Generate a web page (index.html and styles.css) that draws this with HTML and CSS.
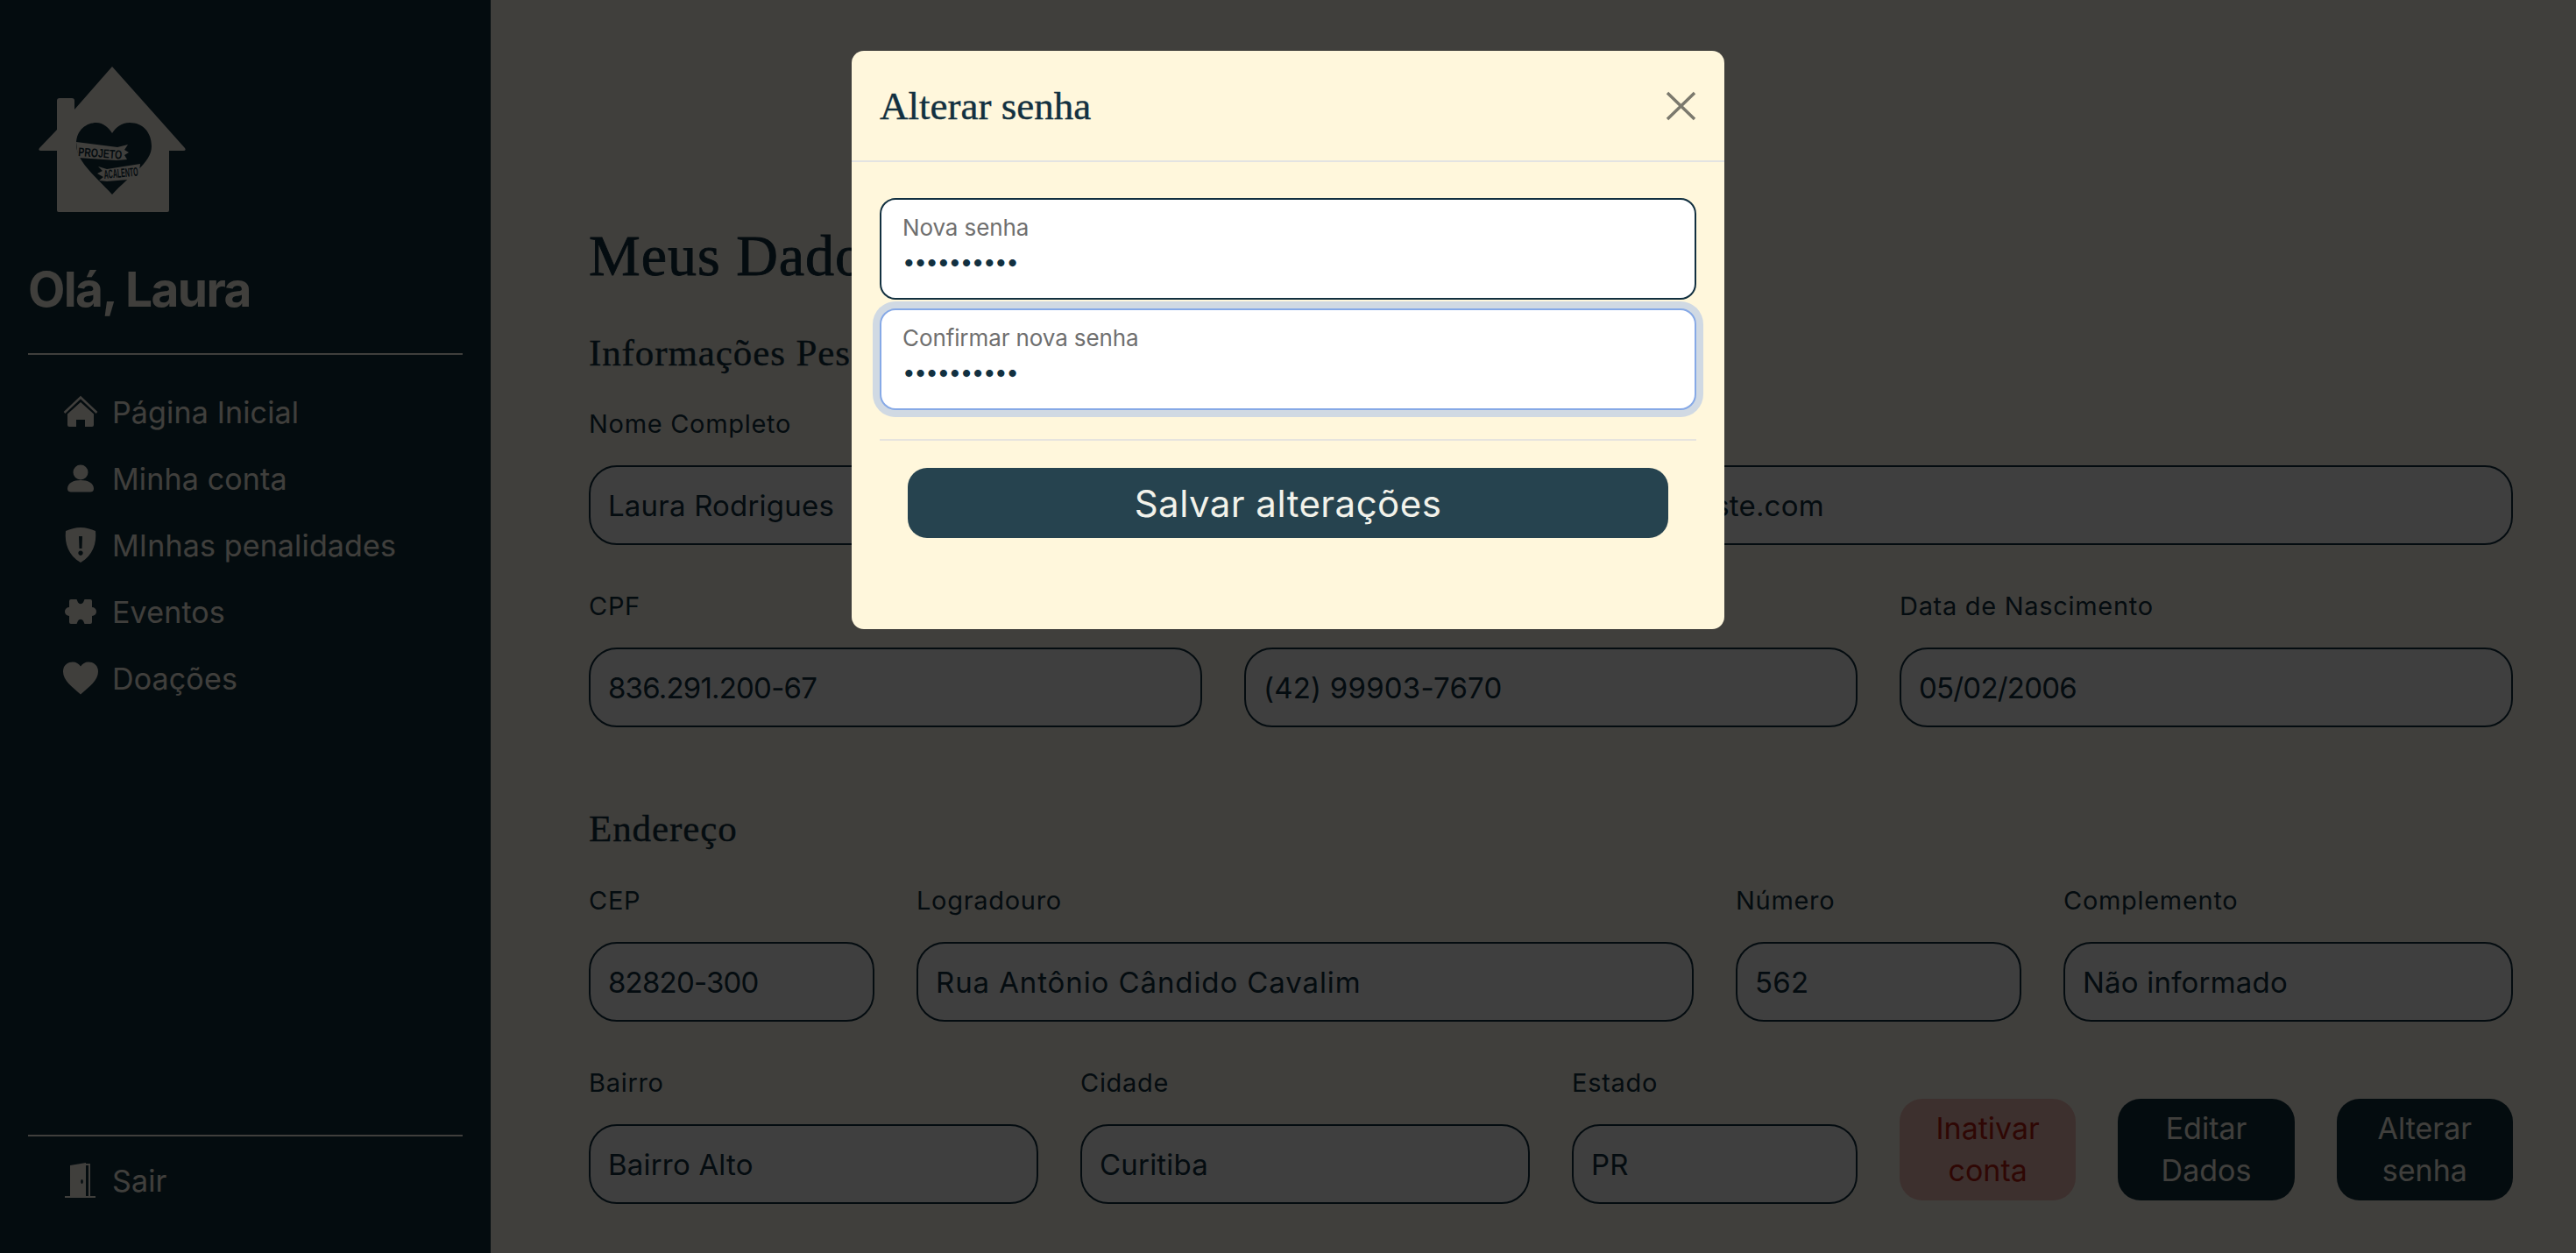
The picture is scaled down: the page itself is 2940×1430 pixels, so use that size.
FILE: index.html
```html
<!DOCTYPE html>
<html lang="pt-BR">
<head>
<meta charset="utf-8">
<title>Meus Dados</title>
<link rel="stylesheet" href="styles.css">
</head>
<body>
<div class="app">
  <aside class="sidebar">
    <svg class="logo" viewBox="0 0 168 166" width="168" height="166">
      <path class="logo-house" d="M84 0 L167 93 Q169 96 165 96 H149 V164 Q149 166 147 166 H23 Q21 166 21 164 V96 H3 Q-1 96 1 93 L21 72 V39 Q21 36 24 36 H38 Q41 36 41 39 V49 Z"/>
      <path class="logo-heart" d="M84 146 C62 122 43 108 43 88 C43 72 55 64 66 64 C74 64 80 70 84 76 C88 70 94 64 104 64 C119 64 129 75 129 91 C129 110 104 124 84 146Z"/>
      <path class="logo-band" d="M43 86 L90 92 L102 89 L98 95 L103 98 L98 101 L101 106 L89 107 L45 104Z"/>
      <path class="logo-band" d="M68 114 L78 117 L116 111 L114 128 L78 131 L69 130 L74 126 L67 122 L73 119Z"/>
      <text class="logo-text" x="45" y="102" textLength="50" lengthAdjust="spacingAndGlyphs" transform="rotate(4 45 102)">PROJETO</text>
      <text class="logo-text" x="75" y="128" textLength="39" lengthAdjust="spacingAndGlyphs" transform="rotate(-5 75 128)">ACALENTO</text>
    </svg>
    <h2 class="greeting">Olá, Laura</h2>
    <hr class="side-rule side-rule-top">
    <nav>
      <ul class="nav-list">
        <li class="nav-item">
          <svg class="nav-icon" viewBox="0 0 40 36"><path class="stroke-icon" d="M1.5 19 L20 1.5 L38.5 19"/><path d="M20 7 L35 20.5 V33 a2 2 0 0 1-2 2 H25 V27 H15 V35 H7 a2 2 0 0 1-2-2 V20.5Z"/></svg>
          <span>Página Inicial</span>
        </li>
        <li class="nav-item">
          <svg class="nav-icon" viewBox="0 0 40 32"><circle cx="20" cy="9" r="8.5"/><path d="M5 28 C5 21 12 18 20 18 C28 18 35 21 35 28 C35 30.500 33 31.500 31 31.500 H9 C7 31.500 5 30.500 5 28Z"/></svg>
          <span>Minha conta</span>
        </li>
        <li class="nav-item">
          <svg class="nav-icon" viewBox="0 0 40 40"><path fill-rule="evenodd" d="M20 0 C26 0 32 2 37 4 C38.500 18 34 32 20 40 C6 32 1.500 18 3 4 C8 2 14 0 20 0Z M18 10 L18.500 24 H21.500 L22 10Z M20 26.500 a2.700 2.700 0 1 0 .01 0Z"/></svg>
          <span>MInhas penalidades</span>
        </li>
        <li class="nav-item">
          <svg class="nav-icon" viewBox="0 0 40 30"><path d="M9 1 H15.500 L17 4.500 A3.500 3.500 0 0 0 23 4.500 L24.500 1 H31 a2 2 0 0 1 2 2 V10 A5 5 0 1 1 33 20 V27 a2 2 0 0 1-2 2 H24.500 L23 25.500 A3.500 3.500 0 0 0 17 25.500 L15.500 29 H9 a2 2 0 0 1-2-2 V20 A5 5 0 1 1 7 10 V3 a2 2 0 0 1 2-2Z"/></svg>
          <span>Eventos</span>
        </li>
        <li class="nav-item">
          <svg class="nav-icon" viewBox="0 0 40 37"><path d="M20 37 C10 28 0 21 0 11 C0 4 5 0 11 0 C15 0 18 2 20 5 C22 2 25 0 29 0 C35 0 40 4 40 11 C40 21 30 28 20 37Z"/></svg>
          <span>Doações</span>
        </li>
      </ul>
    </nav>
    <div class="side-footer">
      <hr class="side-rule">
      <div class="nav-item">
        <svg class="nav-icon" viewBox="0 0 40 40"><path fill-rule="evenodd" d="M8 38 V3 L26 0 V38Z M21.500 19 a1.300 2.500 0 1 0 .01 0Z"/><path class="stroke-icon thin" d="M26 2 H30 V38"/><rect x="2" y="38" width="35" height="2"/></svg>
        <span>Sair</span>
      </div>
    </div>
  </aside>

  <main class="content">
    <h1 class="page-title">Meus Dados</h1>
    <h3 class="section-title">Informações Pessoais</h3>
    <section class="form-grid">
      <div class="field span-6"><label class="field-label">Nome Completo</label><input class="field-input" readonly value="Laura Rodrigues"></div>
      <div class="field span-6"><label class="field-label">E-mail</label><input class="field-input" readonly value="laura@teste.com"></div>
      <div class="field span-4"><label class="field-label">CPF</label><input class="field-input input-tight" readonly value="836.291.200-67"></div>
      <div class="field span-4"><label class="field-label">Telefone</label><input class="field-input" readonly value="(42) 99903-7670"></div>
      <div class="field span-4"><label class="field-label">Data de Nascimento</label><input class="field-input input-tight" readonly value="05/02/2006"></div>
    </section>
    <h3 class="section-title section-gap">Endereço</h3>
    <section class="form-grid">
      <div class="field span-2"><label class="field-label">CEP</label><input class="field-input input-tight" readonly value="82820-300"></div>
      <div class="field span-5"><label class="field-label">Logradouro</label><input class="field-input input-wide" readonly value="Rua Antônio Cândido Cavalim"></div>
      <div class="field span-2"><label class="field-label">Número</label><input class="field-input" readonly value="562"></div>
      <div class="field span-3"><label class="field-label">Complemento</label><input class="field-input" readonly value="Não informado"></div>
      <div class="field span-3"><label class="field-label">Bairro</label><input class="field-input" readonly value="Bairro Alto"></div>
      <div class="field span-3"><label class="field-label">Cidade</label><input class="field-input" readonly value="Curitiba"></div>
      <div class="field span-2"><label class="field-label">Estado</label><input class="field-input" readonly value="PR"></div>
      <div class="actions span-4">
        <button class="action action-danger" type="button">Inativar conta</button>
        <button class="action" type="button">Editar Dados</button>
        <button class="action" type="button">Alterar senha</button>
      </div>
    </section>
  </main>
</div>

<div class="backdrop"></div>
<div class="modal-layer">
  <div class="modal">
    <header class="modal-header">
      <h4 class="modal-title">Alterar senha</h4>
      <button class="modal-close" type="button" aria-label="Fechar">
        <svg viewBox="0 0 35 34" width="35" height="34"><path d="M2 2 L33 32 M33 2 L2 32"/></svg>
      </button>
    </header>
    <div class="modal-body">
      <div class="pw-field">
        <label class="pw-label">Nova senha</label>
        <input class="pw-input" type="password" value="1234567890">
      </div>
      <div class="pw-field pw-focus">
        <label class="pw-label">Confirmar nova senha</label>
        <input class="pw-input" type="password" value="1234567890">
      </div>
      <hr class="modal-rule">
      <button class="save" type="button">Salvar alterações</button>
    </div>
  </div>
</div>
</body>
</html>
```

FILE: styles.css
```css
* { box-sizing: border-box; }
html, body { margin: 0; height: 100%; overflow: hidden; }
body {
  background: #fff9ee;
  color: #1c3140;
  font-family: Inter, "Noto Sans", sans-serif;
}
.app { display: flex; height: 1430px; }

/* sidebar */
.sidebar {
  flex: 0 0 560px;
  display: flex;
  flex-direction: column;
  padding: 76px 32px 45px;
  background: #12323f;
  color: #fff9ee;
}
.logo { display: block; margin-left: 12px; }
.logo-house { fill: #fff9ee; }
.logo-heart { fill: #12323f; }
.logo-band { fill: #fff9ee; }
.logo-text { fill: #12323f; font: 700 14px "Liberation Sans", sans-serif; }
.greeting {
  margin: 53px 0 0;
  font-size: 55px;
  line-height: 70px;
  font-weight: 700;
  letter-spacing: -1.6px;
}
.side-rule { width: 100%; height: 2px; margin: 0; border: 0; background: #fff9ee; }
.side-rule-top { margin-top: 38px; }
.nav-list { list-style: none; margin: 27px 0 0; padding: 0; }
.nav-item {
  display: flex;
  align-items: center;
  gap: 16px;
  height: 76px;
  padding-left: 40px;
  font-size: 34px;
  letter-spacing: .15px;
}
.nav-icon { flex: 0 0 40px; width: 40px; height: 40px; fill: currentColor; }
.stroke-icon { fill: none; stroke: currentColor; stroke-width: 2.5; }
.stroke-icon.thin { stroke-width: 2; }
.side-footer { margin-top: auto; }
.side-footer .nav-item { margin-top: 12px; }

/* content */
.content { flex: 1; min-width: 0; padding: 252px 72px 0 112px; }
.page-title {
  margin: 0 0 41px;
  font: 500 66px/80px "Liberation Serif", serif;
  letter-spacing: 1px;
  -webkit-text-stroke: .9px #123040;
  color: #123040;
}
.section-title {
  margin: 0 0 29px;
  font: 400 43px/60px "Liberation Serif", serif;
  letter-spacing: .9px;
  -webkit-text-stroke: .4px #123040;
  color: #123040;
}
.section-gap { margin-top: 86px; margin-bottom: 30px; }
.form-grid {
  display: grid;
  grid-template-columns: repeat(12, 139px);
  gap: 48px;
}
.span-2 { grid-column: span 2; }
.span-3 { grid-column: span 3; }
.span-4 { grid-column: span 4; }
.span-5 { grid-column: span 5; }
.span-6 { grid-column: span 6; }
.field { display: flex; flex-direction: column; min-width: 0; }
.field-label {
  height: 42px;
  margin-bottom: 27px;
  padding-top: 1px;
  font-size: 29px;
  letter-spacing: .7px;
  line-height: 42px;
  color: #123040;
}
.field-input {
  width: 100%;
  height: 91px;
  padding: 0 20px;
  border: 2px solid #123040;
  border-radius: 32px;
  background: #f9f9fb;
  color: #123040;
  font: 400 33px Inter, "Noto Sans", sans-serif;
  letter-spacing: .2px;
  outline: none;
}
.input-tight { letter-spacing: -.8px; }
.input-wide { letter-spacing: .9px; }
.actions { display: flex; align-items: flex-end; gap: 48px; padding-bottom: 4px; }
.action {
  flex: 1;
  height: 116px;
  padding: 0 24px;
  border: 0;
  border-radius: 26px;
  background: #12323f;
  color: #fff9ee;
  font: 400 34px/48px Inter, "Noto Sans", sans-serif;
}
.action-danger { background: #f4c0b8; color: #bb1c10; }

/* modal */
.backdrop { position: fixed; inset: 0; background: rgba(0, 0, 0, .75); }
.modal-layer { position: fixed; inset: 0; display: flex; justify-content: center; align-items: flex-start; padding-top: 58px; }
.modal {
  width: 996px;
  height: 660px;
  border-radius: 14px;
  background: #fff7dc;
}
.modal-header {
  display: flex;
  justify-content: space-between;
  align-items: center;
  height: 127px;
  padding: 0 32px;
  border-bottom: 2px solid #e3e3e2;
}
.modal-title {
  margin: 0;
  font: 500 45px/60px "Liberation Serif", serif;
  -webkit-text-stroke: .4px #123040;
  color: #123040;
}
.modal-close { padding: 0; border: 0; background: none; display: flex; }
.modal-close path { fill: none; stroke: #7b796d; stroke-width: 3.5; }
.modal-body { padding: 41px 32px 0; }
.pw-field {
  height: 116px;
  padding: 14px 24px 0;
  border: 2px solid #123040;
  border-radius: 18px;
  background: #fff;
}
.pw-field + .pw-field { margin-top: 10px; }
.pw-focus { border-color: #86a9e6; box-shadow: 0 0 0 8px #d0d9e3; }
.pw-label { display: block; font-size: 26px; line-height: 36px; color: #6f6f6f; letter-spacing: -.1px; }
.pw-input {
  display: block;
  width: 100%;
  height: 40px;
  padding: 0;
  border: 0;
  outline: none;
  background: none;
  color: #123040;
  font: 400 26px Inter, sans-serif;
  letter-spacing: -1.5px;
}
.modal-rule { height: 2px; margin: 33px 0 31px; border: 0; background: #e6e4de; }
.save {
  display: block;
  width: 868px;
  height: 80px;
  margin: 0 32px;
  border: 0;
  border-radius: 22px;
  background: #26434f;
  color: #f2f2ea;
  font: 400 42px Inter, sans-serif;
  letter-spacing: .45px;
}
```
